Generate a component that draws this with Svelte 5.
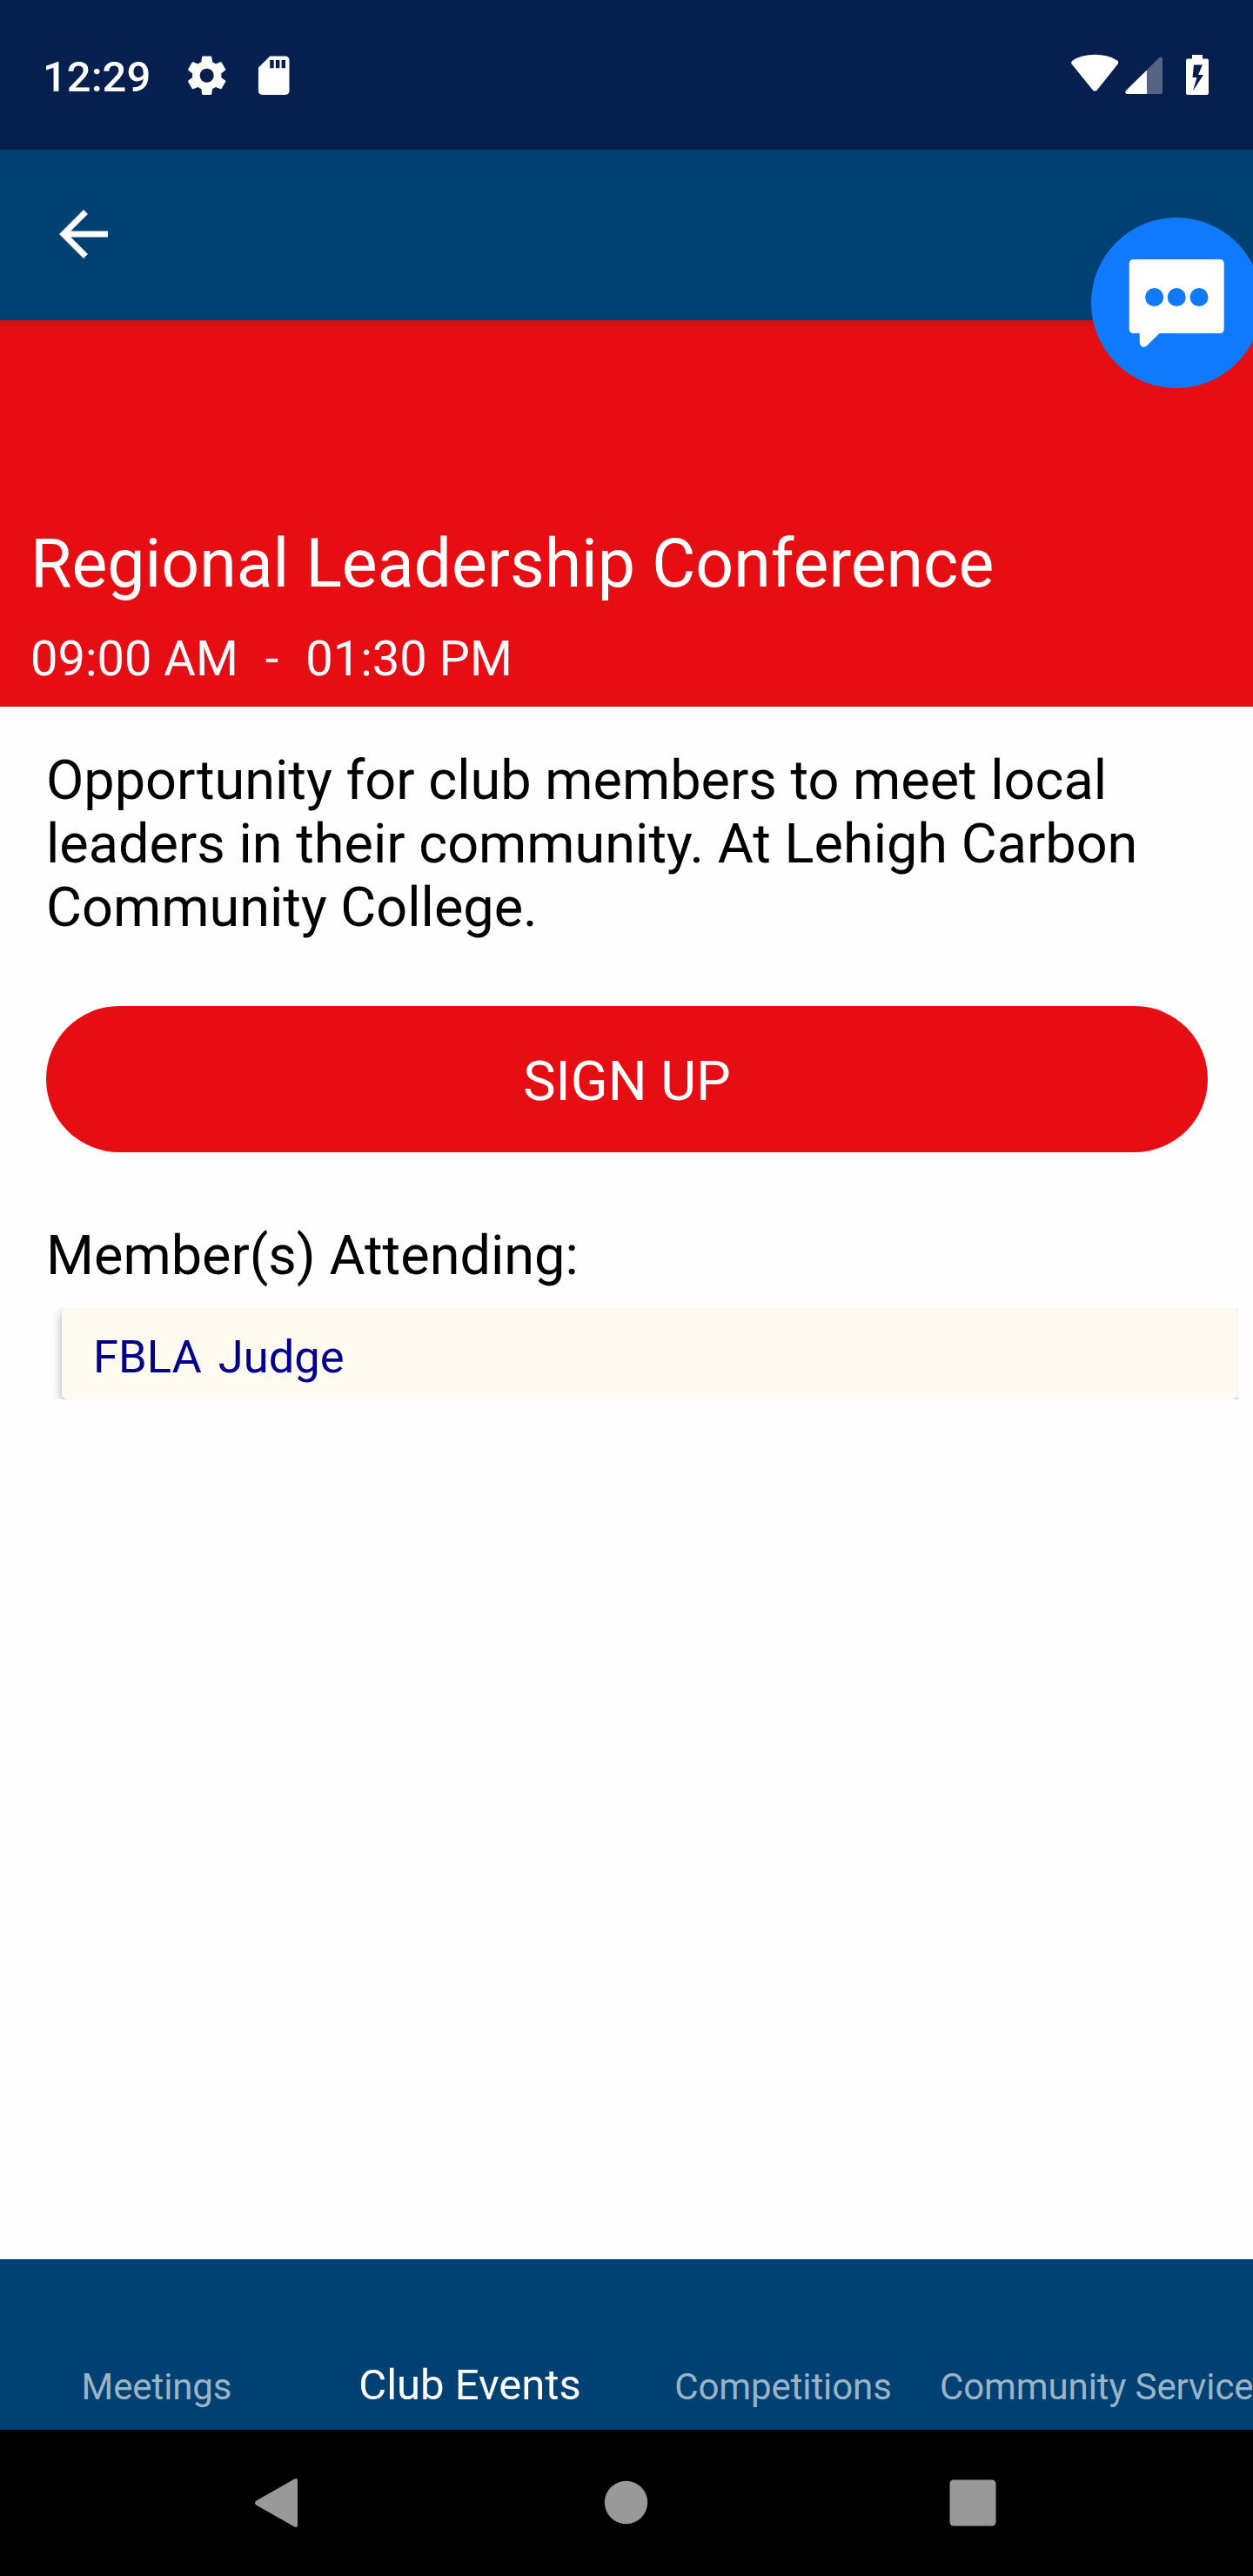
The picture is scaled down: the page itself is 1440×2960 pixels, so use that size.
<script>
  const tabs = [
    { label: 'Meetings', active: false },
    { label: 'Club Events', active: true },
    { label: 'Competitions', active: false },
    { label: 'Community Service', active: false }
  ];
  const members = [{ first: 'FBLA', last: 'Judge' }];
</script>

<div class="screen">
  <header class="status">
    <span class="clock">12:29</span>
    <svg class="gear" viewBox="0 0 24 24"><path d="M19.43 12.98c.04-.32.07-.64.07-.98s-.03-.66-.07-.98l2.11-1.65c.19-.15.24-.42.12-.64l-2-3.46c-.12-.22-.39-.3-.61-.22l-2.49 1c-.52-.4-1.08-.73-1.69-.98l-.38-2.65C14.46 2.18 14.25 2 14 2h-4c-.25 0-.46.18-.49.42l-.38 2.65c-.61.25-1.17.59-1.69.98l-2.49-1c-.23-.09-.49 0-.61.22l-2 3.46c-.13.22-.07.49.12.64l2.11 1.65c-.04.32-.07.65-.07.98s.03.66.07.98l-2.11 1.65c-.19.15-.24.42-.12.64l2 3.46c.12.22.39.3.61.22l2.49-1c.52.4 1.08.73 1.69.98l.38 2.65c.03.24.24.42.49.42h4c.25 0 .46-.18.49-.42l.38-2.65c.61-.25 1.17-.59 1.69-.98l2.49 1c.23.09.49 0 .61-.22l2-3.46c.12-.22.07-.49-.12-.64l-2.11-1.65zM12 15.6c-1.98 0-3.6-1.62-3.6-3.6s1.62-3.6 3.6-3.6 3.6 1.62 3.6 3.6-1.62 3.6-3.6 3.6z" /></svg>
    <svg class="card-icon" viewBox="0 0 24 24"><path d="M18 2h-8L4.02 8 4 20c0 1.1.9 2 2 2h12c1.1 0 2-.9 2-2V4c0-1.1-.9-2-2-2zm-6 6.2h-2V4h2v4.200zm3 0h-2V4h2v4.200zm3 0h-2V4h2v4.200z" /></svg>
    <svg class="signals" viewBox="0 0 160 50">
      <path d="M1.500 13.500Q0.500 11 2.700 9.500Q13 2.700 28.300 2.700T54 9.500Q56 11 54.700 13.500L31 43.300Q28.300 46.300 25.700 43.300Z" />
      <path d="M88 48H65Q62 46.500 64 44L88 20.500Z" />
      <path class="dim" d="M88 20.500L102.300 6Q105.500 4.500 106 7.500V46Q106 48 104 48H88Z" />
      <path fill-rule="evenodd" d="M140 3H152V7.500H157Q159 7.500 159 9.500V47Q159 49 157 49H135Q133 49 133 47V9.500Q133 7.500 135 7.500H140ZM142 14.500L140.500 29H145.500L141 44.500L153 26H147L152 14.500Z" />
    </svg>
  </header>

  <nav class="appbar">
    <svg viewBox="0 0 24 24"><path d="M20 11H7.830l5.590-5.590L12 4l-8 8 8 8 1.410-1.410L7.830 13H20v-2z" /></svg>
  </nav>

  <section class="hero">
    <h1>Regional Leadership Conference</h1>
    <p class="time"><span>09:00 AM</span><span>-</span><span>01:30 PM</span></p>
  </section>

  <main>
    <p class="description">Opportunity for club members to meet local leaders in their community. At Lehigh Carbon Community College.</p>
    <button>SIGN UP</button>
    <h2>Member(s) Attending:</h2>
    <div class="list">
      {#each members as member}
        <div class="member"><span>{member.first}</span><span>{member.last}</span></div>
      {/each}
    </div>
  </main>

  <nav class="tabs">
    {#each tabs as tab}
      <span class="tab" class:active={tab.active}>{tab.label}</span>
    {/each}
  </nav>

  <footer class="system">
    <svg viewBox="0 0 1440 168">
      <path d="M338 56.800Q342 54.500 342 59V109Q342 113.500 338 111.200L294.500 86.500Q291.500 84 294.500 81.500Z" />
      <circle cx="719.500" cy="83.500" r="24.700" />
      <rect x="1091.500" y="57.500" width="53" height="53" rx="4.500" />
    </svg>
  </footer>

  <div class="chat">
    <svg viewBox="0 0 196 196">
      <path d="M48.700 48H147.700Q152.700 48 152.700 53V128Q152.700 133 147.700 133H78.500L64.200 147Q60.500 150 57.500 147.500Q55.700 146 55.700 144V133H48.700Q43.700 133 43.700 128V53Q43.700 48 48.700 48Z" />
      <g class="dots"><circle cx="72.600" cy="91.500" r="10.500" /><circle cx="98.200" cy="91.500" r="10.500" /><circle cx="124" cy="91.500" r="10.500" /></g>
    </svg>
  </div>
</div>

<style>
  :global(body) { margin: 0; }
  .screen {
    position: relative;
    display: flex;
    flex-direction: column;
    width: 1440px;
    height: 2960px;
    overflow: hidden;
    background: #fefefe;
    font-family: Roboto, sans-serif;
  }
  svg { display: block; fill: #fff; }
  h1, h2, p { margin: 0; font-weight: 400; }

  .status {
    display: flex;
    box-sizing: border-box;
    height: 172px;
    padding: 0 50px 0 49px;
    background: #051f4f;
  }
  .clock {
    width: 162px;
    padding-top: 5px;
    color: #fff;
    font-size: 49px;
    font-weight: 500;
    line-height: 167px;
  }
  .gear, .card-icon { width: 53.400px; height: 53.400px; margin-top: 59.700px; }
  .card-icon { margin-left: 23.500px; }
  .signals { width: 160px; height: 50px; margin: 60px 0 0 auto; }
  .dim { fill: #566484; }

  .appbar {
    display: flex;
    align-items: center;
    height: 196px;
    padding-left: 53.500px;
    background: #004173;
  }
  .appbar svg { width: 84px; height: 84px; margin-top: -3px; }

  .hero {
    display: flex;
    flex-direction: column;
    justify-content: flex-end;
    gap: 31px;
    box-sizing: border-box;
    height: 444px;
    padding: 0 35px 22px;
    color: #fff;
    background: linear-gradient(#d10f12, #e70e13 14px);
  }
  h1 { font-size: 77px; line-height: 90px; }
  .time { display: flex; gap: 31px; color: #f8f8ff; font-size: 56px; line-height: 66px; }

  main { flex: 1; padding: 48px 52px 0 53px; }
  .description { color: #000; font-size: 63px; line-height: 73px; }
  button {
    display: block;
    box-sizing: border-box;
    width: 100%;
    height: 168px;
    margin: 77px 0 82px;
    padding: 5px 0 0;
    border: 0;
    border-radius: 84px;
    color: #fff;
    background: #e70e13;
    font: 400 63px/163px Roboto, sans-serif;
  }
  h2 { color: #000; font-size: 63px; line-height: 73px; }
  .list { margin: 24px -35px 0 0; padding-left: 18px; overflow: hidden; }
  .member {
    display: flex;
    gap: 19px;
    box-sizing: border-box;
    height: 105px;
    padding: 7px 36px 0;
    border-radius: 7px;
    color: #00008b;
    background: #fffaef;
    box-shadow: 0 4px 12px rgba(0, 0, 0, 0.34);
    font-size: 52.500px;
    line-height: 98px;
  }

  .tabs {
    display: grid;
    grid-template-columns: repeat(4, 360px);
    align-items: baseline;
    box-sizing: border-box;
    height: 196px;
    padding-top: 115px;
    background: #004173;
  }
  .tab {
    color: #99b3c7;
    font-size: 42px;
    letter-spacing: -0.100px;
    line-height: 60px;
    text-align: center;
    white-space: nowrap;
  }
  .active { color: #fff; font-size: 49px; letter-spacing: 0; }

  .system { height: 168px; background: #000; }
  .system svg { width: 1440px; height: 168px; fill: #999; }

  /* Floating chat head, dragged partly past the right edge */
  .chat {
    position: absolute;
    top: 250px;
    left: 1254px;
    width: 196px;
    height: 196px;
    border-radius: 50%;
    background: #107aff;
  }
  .dots { fill: #107aff; }
</style>
